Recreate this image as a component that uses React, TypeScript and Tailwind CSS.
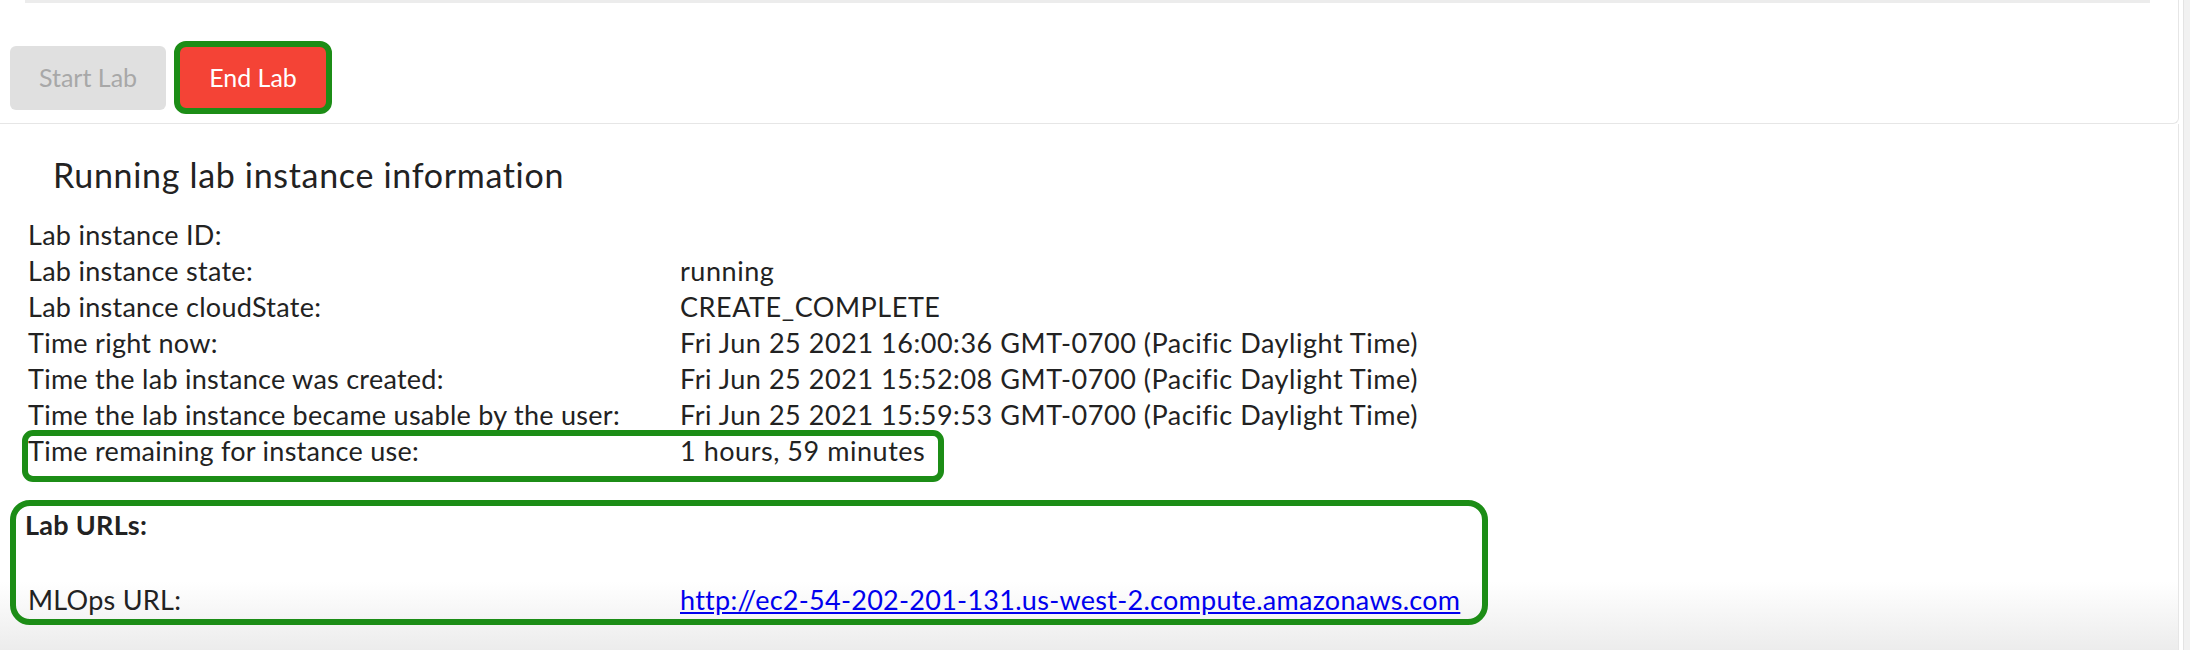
import React from "react";

const rows: [string, string][] = [
  ["Lab instance ID:", ""],
  ["Lab instance state:", "running"],
  ["Lab instance cloudState:", "CREATE_COMPLETE"],
  ["Time right now:", "Fri Jun 25 2021 16:00:36 GMT-0700 (Pacific Daylight Time)"],
  ["Time the lab instance was created:", "Fri Jun 25 2021 15:52:08 GMT-0700 (Pacific Daylight Time)"],
  ["Time the lab instance became usable by the user:", "Fri Jun 25 2021 15:59:53 GMT-0700 (Pacific Daylight Time)"],
];

const App = () => {
  return (
    <div className="w-[2190px] h-[650px] overflow-hidden bg-white flex font-['Lato',sans-serif] text-[#222]">
      <div className="w-[2179px] flex flex-col">
        {/* Lab controls */}
        <div className="h-[124px] flex flex-col border-r border-b border-[#e6e6e6] rounded-br-[6px]">
          <div className="ml-[25px] w-[2125px] h-[3px] bg-[#ececec]" />
          <div className="mt-[38px] pl-[10px] flex items-center gap-[8px]">
            <button className="w-[156px] h-[64px] rounded-[6px] bg-[#e0e0e0] text-[#a8a8a8] text-[25px]">
              Start Lab
            </button>
            <button className="w-[158px] h-[73px] rounded-[12px] border-[6px] border-[#1c8d16] bg-[#f44336] text-white text-[25px]">
              End Lab
            </button>
          </div>
        </div>

        {/* Instance info */}
        <div className="flex-1 border-r border-[#e6e6e6] bg-[linear-gradient(to_bottom,#ffffff_0%,#ffffff_87%,#ececec_100%)]">
          <h2 className="mt-[31px] pl-[53px] text-[34px] leading-[40px] tracking-[0.02em] text-[#222]">
            Running lab instance information
          </h2>

          <div className="mt-[22px] pl-[28px] text-[27px] leading-[36px]">
            {rows.map(([label, value]) => (
              <div key={label} className="grid grid-cols-[652px_1fr]">
                <span className="tracking-[0.01em]">{label}</span>
                <span className="tracking-[0.02em]">{value}</span>
              </div>
            ))}

            <div className="relative grid grid-cols-[652px_1fr]">
              <span className="tracking-[0.01em]">Time remaining for instance use:</span>
              <span className="tracking-[0.02em]">1 hours, 59 minutes</span>
              <span className="absolute -left-[6px] -top-[3px] w-[922px] h-[52px] rounded-[11px] border-[6px] border-[#1c8d16]" />
            </div>

            <div className="relative mt-[38px]">
              <div className="font-bold -ml-[3px] tracking-[0.01em]">Lab URLs:</div>
              <div className="mt-[39px] grid grid-cols-[652px_1fr]">
                <span className="tracking-[0.01em]">MLOps URL:</span>
                <a href="#" className="text-[#0000ee] underline tracking-[0.01em]">
                  http://ec2-54-202-201-131.us-west-2.compute.amazonaws.com
                </a>
              </div>
              <span className="absolute -left-[18px] -top-[7px] w-[1478px] h-[125px] rounded-[20px] border-[6px] border-[#1c8d16]" />
            </div>
          </div>
        </div>
      </div>
      <div className="flex-1 flex">
        <div className="w-[4px] bg-white" />
        <div className="flex-1 bg-[#f1f1f1] border-l border-[#e3e3e3]" />
      </div>
    </div>
  );
};

export default App;
